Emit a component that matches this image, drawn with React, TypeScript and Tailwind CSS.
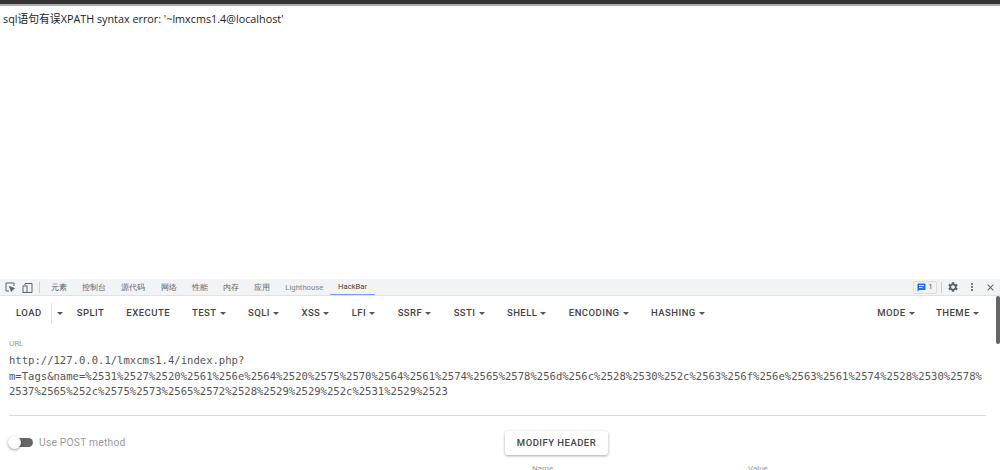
import React from 'react';
import { MdClose, MdMoreVert, MdSettings } from 'react-icons/md';

const menus = ['TEST', 'SQLI', 'XSS', 'LFI', 'SSRF', 'SSTI', 'SHELL', 'ENCODING', 'HASHING'];
const tabs = ['元素', '控制台', '源代码', '网络', '性能', '内存', '应用'];

function Caret() {
  return <span className="ml-[3px] inline-block w-0 h-0 border-x-[3px] border-x-transparent border-t-[3px] border-t-[#555]" />;
}

function MenuButton({ label }: { label: string }) {
  return (
    <button className="flex items-center text-[9.500px] font-medium tracking-[0.05em] text-[#444] whitespace-nowrap">
      {label}
      <Caret />
    </button>
  );
}

function DevtoolsTabs() {
  return (
    <div className="h-[17px] bg-[#f1f3f4] border-b border-[#dfe1e5] flex items-center text-[#5f6368] shrink-0">
      <svg className="ml-[5px] w-[10px] h-[10px]" viewBox="0 0 10 10" fill="none" stroke="#5f6368" strokeWidth="1">
        <path d="M4 9H1V1h8v3" />
        <path d="M4.500 4.500 9.500 6.500 7.500 7.500 6.500 9.500Z" fill="#5f6368" />
      </svg>
      <svg className="ml-[7px] w-[11px] h-[11px]" viewBox="0 0 11 11" fill="none" stroke="#5f6368" strokeWidth="1">
        <path d="M3 3V1.500h7v9H3" />
        <rect x="1" y="4" width="4" height="6.500" />
      </svg>
      <div className="ml-[6px] w-px h-[11px] bg-[#ccc]" />
      <div className="ml-[11px] self-stretch flex items-center gap-[15.200px] text-[7.700px]">
        {tabs.map((tab) => (
          <span key={tab} className="pt-[1px]">{tab}</span>
        ))}
        <span className="pt-[1px] text-[#80868b]">Lighthouse</span>
        <span className="-ml-[8.500px] px-[8px] self-stretch flex items-center pt-[1px] text-[#444] border-b border-[#6ea2f0]">HackBar</span>
      </div>
      <div className="ml-auto flex items-center">
        <div className="flex items-center justify-center gap-[2px] w-[24px] h-[13px] border border-[#dadce0] rounded-[2px] text-[8px]">
          <svg className="w-[9px] h-[9px]" viewBox="0 0 9 9">
            <path d="M1 0.500h7a.5.5 0 0 1 .5.5v5.500a.5.5 0 0 1-.5.5H2.500L.5 8.500V1a.5.5 0 0 1 .5-.5Z" fill="#1a73e8" />
            <path d="M2 2.500h5M2 4.500h3.500" stroke="#fff" strokeWidth="0.800" />
          </svg>
          1
        </div>
        <div className="ml-[4px] w-px h-[11px] bg-[#ccc]" />
        <MdSettings className="ml-[5px] w-[12px] h-[12px]" />
        <MdMoreVert className="ml-[7px] w-[12px] h-[12px]" />
        <MdClose className="ml-[6.500px] mr-[4.500px] w-[11px] h-[11px]" />
      </div>
    </div>
  );
}

function Toolbar() {
  return (
    <div className="h-[33px] pl-[16px] pr-[21px] pt-[1px] flex items-center shrink-0 text-[#444]">
      <button className="text-[9.500px] font-medium tracking-[0.05em]">LOAD</button>
      <div className="ml-[9px] w-px h-[21px] bg-[#e4e4e4]" />
      <span className="ml-[2px] flex"><Caret /></span>
      <button className="ml-[14px] text-[9.500px] font-medium tracking-[0.05em]">SPLIT</button>
      <button className="ml-[22px] text-[9.500px] font-medium tracking-[0.05em]">EXECUTE</button>
      <div className="ml-[22px] flex items-center gap-[22.400px]">
        {menus.map((m) => (
          <MenuButton key={m} label={m} />
        ))}
      </div>
      <div className="ml-auto flex items-center gap-[21.500px]">
        <MenuButton label="MODE" />
        <MenuButton label="THEME" />
      </div>
    </div>
  );
}

export default function App() {
  return (
    <div className="h-[470px] w-[1000px] overflow-hidden flex flex-col bg-white font-['Roboto',sans-serif]">
      <div className="h-[6px] bg-[#333] border-b-2 border-[#aaa] shrink-0" />
      <div className="flex-1 pl-[3px] pt-[6px] text-[10.800px] leading-[14px] text-[#222] font-['Open_Sans','Noto_Sans_CJK_SC',sans-serif]">
        sql语句有误XPATH syntax error: '~lmxcms1.4@localhost'
      </div>
      <div className="relative h-[191px] flex flex-col shrink-0">
        <DevtoolsTabs />
        <Toolbar />
        <div className="px-[9px] pt-[10px]">
          <div className="text-[8px] leading-[10px] text-[#999]">URL</div>
          <div className="mt-[4px] font-['DejaVu_Sans_Mono',monospace] text-[10.570px] leading-[15.700px] text-[#555] whitespace-pre">
            {'http://127.0.0.1/lmxcms1.4/index.php?\n'}
            {'m=Tags&name=%2531%2527%2520%2561%256e%2564%2520%2575%2570%2564%2561%2574%2565%2578%256d%256c%2528%2530%252c%2563%256f%256e%2563%2561%2574%2528%2530%2578%\n'}
            {'2537%2565%252c%2575%2573%2565%2572%2528%2529%2529%252c%2531%2529%2523'}
          </div>
          <div className="mt-[15px] mr-[5px] h-px bg-[#d9d9d9]" />
        </div>
        <div className="flex items-start pl-[9px] pt-[15px]">
          <div className="flex items-center w-[496px] pt-[4px]">
            <div className="relative w-[23px] h-[9px] rounded-full bg-[#666] ml-[1px]">
              <div className="absolute -left-[2px] -top-[2px] w-[13px] h-[13px] rounded-full bg-white shadow-[0_1px_3px_rgba(0,0,0,0.4)]" />
            </div>
            <span className="ml-[6px] text-[10.300px] text-[#999] tracking-[0.02em]">Use POST method</span>
          </div>
          <button className="w-[103px] h-[24px] pt-[1px] rounded-[3px] bg-white shadow-[0_1px_3px_rgba(0,0,0,0.35)] text-[9.500px] font-medium tracking-[0.05em] text-[#444]">
            MODIFY HEADER
          </button>
        </div>
        <div className="flex pl-[532px] pt-[9px] text-[8px] leading-[10px] text-[#999]">
          <span className="w-[216px]">Name</span>
          <span>Value</span>
        </div>
        <div className="absolute right-0 top-[17px] w-[4px] h-[48px] rounded-[2px] bg-[#666]" />
      </div>
    </div>
  );
}
